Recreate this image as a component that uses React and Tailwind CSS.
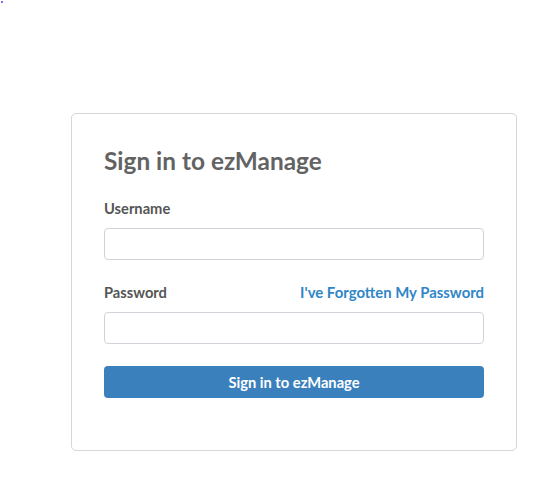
export default function App() {
  return (
    <div className="w-[544px] h-[491px] bg-white relative" style={{ fontFamily: "Lato, 'Open Sans', sans-serif" }}>
      <div className="absolute left-[1px] top-[1px] w-[2px] h-[2px] bg-[#3b3bf0] opacity-70" />
      <div className="pt-[113px] pl-[71px]">
        <div className="w-[446px] h-[338px] border border-[#d6d6db] rounded-[5px] px-[32px] pt-[32px]">
          <h1 className="text-[24.4px] leading-[30px] font-bold text-[#636363]">Sign in to ezManage</h1>
          <div className="mt-[24px] text-[14.7px] leading-[16px] font-bold text-[#555]">Username</div>
          <input className="mt-[12px] block w-full h-[32px] border border-[#cfd2d8] rounded-[4px] outline-none" />
          <div className="mt-[24px] flex justify-between items-center text-[14.7px] leading-[16px] font-bold">
            <span className="text-[#555]">Password</span>
            <span className="text-[#2f86c7] text-[14.9px]">I've Forgotten My Password</span>
          </div>
          <input type="password" className="mt-[12px] block w-full h-[32px] border border-[#cfd2d8] rounded-[4px] outline-none" />
          <button className="mt-[22px] block w-full h-[32px] rounded-[4px] bg-[#3a80bd] text-white text-[14.7px] font-bold">Sign in to ezManage</button>
        </div>
      </div>
    </div>
  );
}
